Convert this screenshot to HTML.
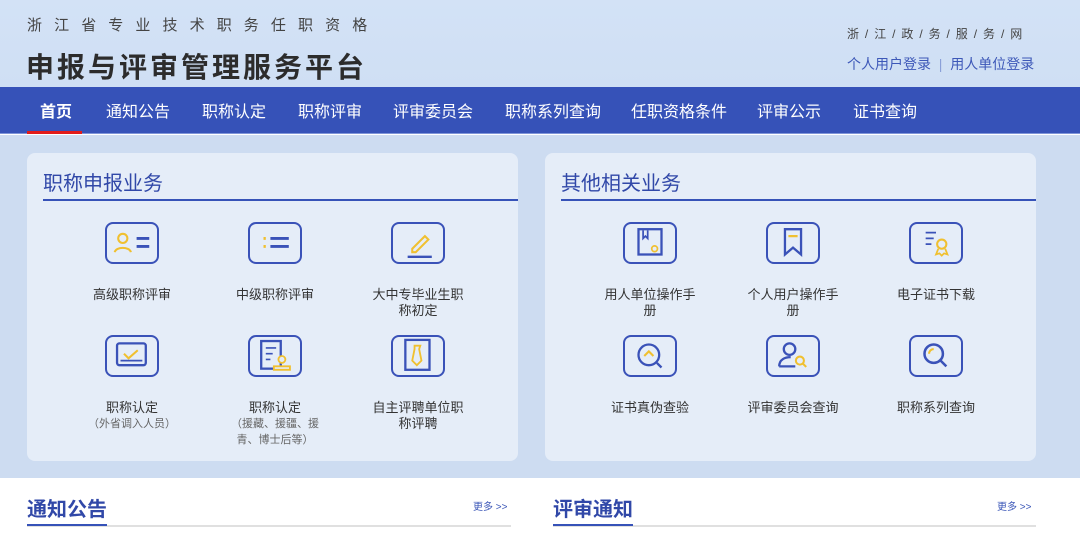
<!DOCTYPE html>
<html><head><meta charset="utf-8"><style>
*{margin:0;padding:0;box-sizing:border-box}
body{width:1080px;height:544px;overflow:hidden;font-family:"Liberation Sans","Noto Sans CJK SC",sans-serif;background:#fff;position:relative}
.hdr{position:absolute;left:0;top:0;width:1080px;height:87px;background:linear-gradient(#d3e2f6,#cfdff4)}
.sub{position:absolute;left:27px;top:14px;font-size:15px;letter-spacing:12.1px;color:#444}
.ttl{position:absolute;left:26px;top:46px;font-size:28px;font-weight:bold;letter-spacing:3px;color:#2c2c2c}
.gov{position:absolute;left:847px;top:25px;font-size:12px;color:#444;letter-spacing:1.3px}
.login{position:absolute;left:847px;top:54px;font-size:14px;color:#3d58b8}
.nav{position:absolute;left:0;top:87px;width:1080px;height:47px;background:#3652b8;border-bottom:1px solid #7f95d8}
.nav span{position:absolute;top:11px;font-size:16px;color:#fff}
.red{position:absolute;left:27px;top:131px;width:55px;height:3px;background:#e21b1b}
.main{position:absolute;left:0;top:135px;width:1080px;height:343px;background:#cddcf1}
.card{position:absolute;top:18px;width:491px;height:308px;background:#e5edf8;border-radius:8px}
.card h2{position:absolute;left:16px;top:14px;font-size:20px;font-weight:normal;color:#3148a8}
.card .ln{position:absolute;left:16px;top:46px;width:475px;height:2px;background:#3652b8}
.ic{position:absolute;width:54px;height:42px;border:2.5px solid #3a52b8;border-radius:8px}
.ic svg{position:absolute;left:0;top:0;transform:scale(1.15);transform-origin:25px 19px}
.lb{position:absolute;width:130px;text-align:center;font-size:13px;color:#333;line-height:16px}
.lb small{display:block;font-size:11px;color:#666;line-height:16px}
.sec{position:absolute;top:493px;font-size:20px;font-weight:bold;color:#3148a8}
.more{position:absolute;top:498px;font-size:10px;color:#3d58b8}
.bl{position:absolute;top:525px;height:2px;background:#e0e0e0}
.bb{position:absolute;top:524px;width:80px;height:2px;background:#3652b8}
</style></head><body>
<div class="hdr">
<div class="sub">浙江省专业技术职务任职资格</div>
<div class="ttl">申报与评审管理服务平台</div>
<div class="gov">浙 / 江 / 政 / 务 / 服 / 务 / 网</div>
<div class="login">个人用户登录 &nbsp;<span style="color:#8aa0d8">|</span>&nbsp; 用人单位登录</div>
</div>
<div class="nav">
<span style="left:40px;font-weight:bold">首页</span><span style="left:106px">通知公告</span><span style="left:202px">职称认定</span><span style="left:298px">职称评审</span><span style="left:393px">评审委员会</span><span style="left:505px">职称系列查询</span><span style="left:631px">任职资格条件</span><span style="left:757px">评审公示</span><span style="left:853px">证书查询</span>
</div>
<div class="red"></div>
<div class="main">
<div class="card" style="left:27px"><h2>职称申报业务</h2><div class="ln"></div>
<div class="ic" style="left:78px;top:69px"><svg width="50" height="38"><circle cx="17" cy="15" r="4" fill="none" stroke="#f0c030" stroke-width="1.8"/><path d="M10 27c1-5 13-5 14 0" fill="none" stroke="#f0c030" stroke-width="1.8"/><path d="M29 15h11M29 22h11" stroke="#3a52b8" stroke-width="2.5"/></svg></div>
<div class="lb" style="left:40px;top:134px">高级职称评审</div>
<div class="ic" style="left:221px;top:69px"><svg width="50" height="38"><path d="M15 15h2M15 22h2" stroke="#f0c030" stroke-width="2.5"/><path d="M21 15h16M21 22h16" stroke="#3a52b8" stroke-width="2.5"/></svg></div>
<div class="lb" style="left:183px;top:134px">中级职称评审</div>
<div class="ic" style="left:364px;top:69px"><svg width="50" height="38"><path d="M20 24l11-11 3 3-11 11h-3z" fill="none" stroke="#f0c030" stroke-width="1.8"/><path d="M16 31h21" stroke="#3a52b8" stroke-width="2"/></svg></div>
<div class="lb" style="left:326px;top:134px">大中专毕业生职<br>称初定</div>
<div class="ic" style="left:78px;top:182px"><svg width="50" height="38"><rect x="12" y="8" width="25" height="19" rx="2" fill="none" stroke="#3a52b8" stroke-width="2"/><path d="M18 17l4 4 8-7" fill="none" stroke="#f0c030" stroke-width="1.8"/><path d="M15 23h19" stroke="#3a52b8" stroke-width="1.5"/></svg></div>
<div class="lb" style="left:40px;top:247px">职称认定<small>（外省调入人员）</small></div>
<div class="ic" style="left:221px;top:182px"><svg width="50" height="38"><rect x="13" y="6" width="17" height="24" fill="none" stroke="#3a52b8" stroke-width="2"/><path d="M17 12h9M17 17h6M17 22h4" stroke="#3a52b8" stroke-width="1.5"/><circle cx="31" cy="22" r="3" fill="#e5edf8" stroke="#f0c030" stroke-width="1.6"/><path d="M24 31v-3h14v3z" fill="#e5edf8" stroke="#f0c030" stroke-width="1.6"/></svg></div>
<div class="lb" style="left:183px;top:247px">职称认定<small>（援藏、援疆、援<br>青、博士后等）</small></div>
<div class="ic" style="left:364px;top:182px"><svg width="50" height="38"><rect x="14" y="5" width="21" height="26" fill="none" stroke="#3a52b8" stroke-width="2"/><path d="M22 10h5l-1 3 2 10-4 4-4-4 2-10z" fill="none" stroke="#f0c030" stroke-width="1.6"/></svg></div>
<div class="lb" style="left:326px;top:247px">自主评聘单位职<br>称评聘</div>
</div>
<div class="card" style="left:545px"><h2>其他相关业务</h2><div class="ln"></div>
<div class="ic" style="left:78px;top:69px"><svg width="50" height="38"><rect x="15" y="7" width="20" height="22" fill="none" stroke="#3a52b8" stroke-width="2"/><path d="M19 8v7l2-2 2 2V8" fill="none" stroke="#3a52b8" stroke-width="1.5"/><circle cx="29" cy="24" r="2.5" fill="none" stroke="#f0c030" stroke-width="1.5"/></svg></div>
<div class="lb" style="left:40px;top:134px">用人单位操作手<br>册</div>
<div class="ic" style="left:221px;top:69px"><svg width="50" height="38"><path d="M18 7h14v22l-7-6-7 6z" fill="none" stroke="#3a52b8" stroke-width="2"/><path d="M21 13h8" stroke="#f0c030" stroke-width="2"/></svg></div>
<div class="lb" style="left:183px;top:134px">个人用户操作手<br>册</div>
<div class="ic" style="left:364px;top:69px"><svg width="50" height="38"><path d="M16 10h9M16 15h7M16 20h5" stroke="#3a52b8" stroke-width="1.5"/><circle cx="30" cy="20" r="4" fill="none" stroke="#f0c030" stroke-width="1.8"/><path d="M27 24l-2 5 3-1 2 2 2-2 3 1-2-5" fill="none" stroke="#f0c030" stroke-width="1.5"/></svg></div>
<div class="lb" style="left:326px;top:134px">电子证书下载</div>
<div class="ic" style="left:78px;top:182px"><svg width="50" height="38"><circle cx="24" cy="18" r="9" fill="none" stroke="#3a52b8" stroke-width="2"/><path d="M31 25l4 4" stroke="#3a52b8" stroke-width="2"/><path d="M20 19l4-4 4 4" fill="none" stroke="#f0c030" stroke-width="1.8"/></svg></div>
<div class="lb" style="left:40px;top:247px">证书真伪查验</div>
<div class="ic" style="left:221px;top:182px"><svg width="50" height="38"><circle cx="22" cy="13" r="5" fill="none" stroke="#3a52b8" stroke-width="2"/><path d="M13 28c0-6 5-8 10-8" fill="none" stroke="#3a52b8" stroke-width="2"/><path d="M13 28h14" stroke="#3a52b8" stroke-width="2"/><circle cx="31" cy="23" r="3.5" fill="none" stroke="#f0c030" stroke-width="1.8"/><path d="M33.5 25.5l3 3" stroke="#f0c030" stroke-width="1.8"/></svg></div>
<div class="lb" style="left:183px;top:247px">评审委员会查询</div>
<div class="ic" style="left:364px;top:182px"><svg width="50" height="38"><circle cx="23" cy="17" r="8" fill="none" stroke="#3a52b8" stroke-width="2.2"/><path d="M29 23l5 5" stroke="#3a52b8" stroke-width="2.2"/><path d="M19 17a4 4 0 0 1 4-4" fill="none" stroke="#f0c030" stroke-width="1.8"/></svg></div>
<div class="lb" style="left:326px;top:247px">职称系列查询</div>
</div>
</div>
<div class="sec" style="left:27px">通知公告</div><div class="more" style="left:473px">更多 &gt;&gt;</div>
<div class="bl" style="left:27px;width:484px"></div><div class="bb" style="left:27px"></div>
<div class="sec" style="left:553px">评审通知</div><div class="more" style="left:997px">更多 &gt;&gt;</div>
<div class="bl" style="left:553px;width:483px"></div><div class="bb" style="left:553px"></div>
</body></html>
